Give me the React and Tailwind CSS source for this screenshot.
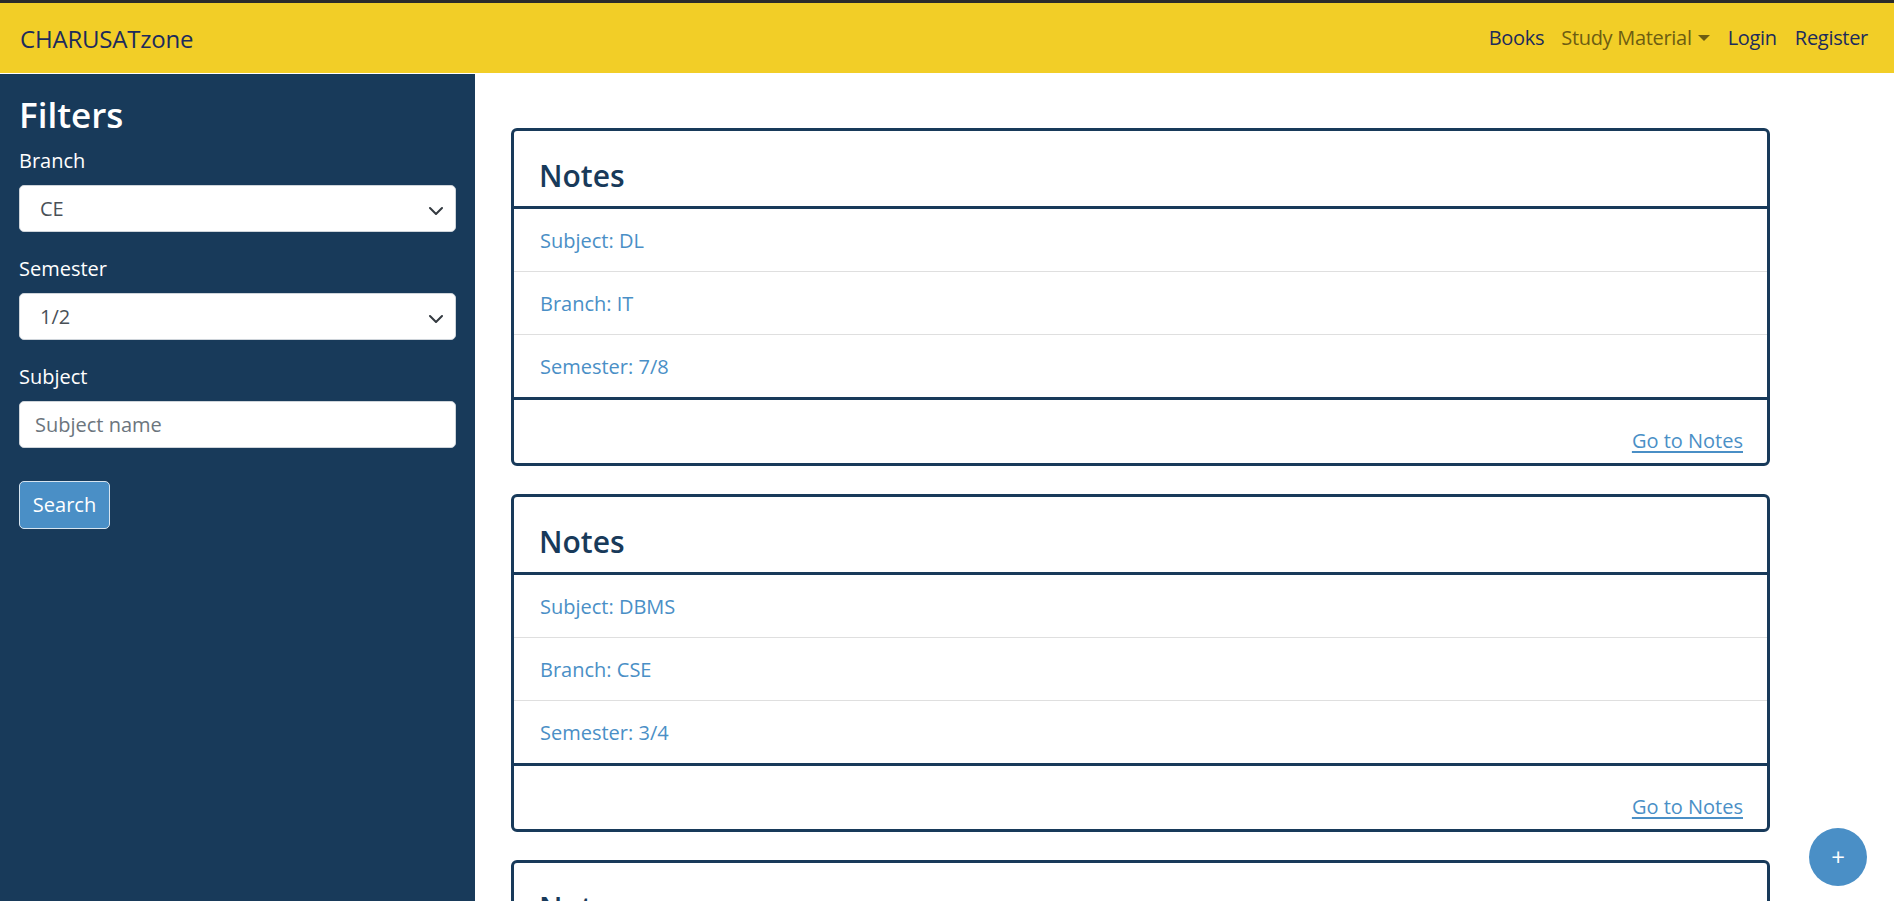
import React from "react";

const FONT = { fontFamily: '"Open Sans", "Noto Sans", sans-serif' };

function Chevron() {
  return (
    <svg
      className="pointer-events-none absolute right-[12px] top-1/2 -translate-y-1/2"
      width="16"
      height="12"
      viewBox="0 0 16 12"
      fill="none"
    >
      <path d="m2 5 6 6 6-6" stroke="#343a40" strokeWidth="2" strokeLinecap="round" strokeLinejoin="round" />
    </svg>
  );
}

function SelectField({ label, value, options }) {
  return (
    <div className="mb-[22px]">
      <div className="mb-[9px] h-[30px] text-[20px] leading-[30px] text-white">{label}</div>
      <div className="relative h-[47px]">
        <select
          defaultValue={value}
          className="h-full w-full appearance-none rounded-[5px] border border-[#ced4da] bg-white pl-[20px] text-[20px] text-[#495057] outline-none"
          style={FONT}
        >
          {options.map((o) => (
            <option key={o}>{o}</option>
          ))}
        </select>
        <Chevron />
      </div>
    </div>
  );
}

function NoteCard({ subject, branch, semester, partial }) {
  return (
    <div className="mb-[28px] w-[1259px] rounded-[6px] border-[3px] border-[#183a5a] bg-white">
      <div className="h-[78px] border-b-[3px] border-[#183a5a] pl-[25px] pt-[27px]">
        <div className="text-[30px] font-semibold leading-[36px] text-[#183a5a]">Notes</div>
      </div>
      {!partial && (
        <>
          <div className="flex h-[63px] items-center border-b border-[#dfdfdf] pl-[26px] pt-[2px] text-[20px] leading-[30px] text-[#4a8fc6]">
            Subject: {subject}
          </div>
          <div className="flex h-[63px] items-center border-b border-[#dfdfdf] pl-[26px] pt-[2px] text-[20px] leading-[30px] text-[#4a8fc6]">
            Branch: {branch}
          </div>
          <div className="flex h-[62px] items-center pl-[26px] pt-[2px] text-[20px] leading-[30px] text-[#4a8fc6]">
            Semester: {semester}
          </div>
          <div className="flex h-[66px] justify-end border-t-[3px] border-[#183a5a] pr-[24px] pt-[26px]">
            <a href="#" className="h-[30px] text-[20px] leading-[30px] text-[#4a8fc6] underline underline-offset-[3px]">
              Go to Notes
            </a>
          </div>
        </>
      )}
    </div>
  );
}

export default function App() {
  return (
    <div className="relative h-[901px] overflow-hidden bg-white" style={FONT}>
      <div className="h-[3px] bg-[#2b2b2b]" />
      <nav className="flex h-[70px] items-center justify-between bg-[#f2ce27] pl-[20px] pr-[26px]">
        <a href="#" className="text-[24px] leading-[37px] tracking-[-0.2px] text-[#1c2b5c]">CHARUSATzone</a>
        <div className="flex items-center text-[20px] leading-[30px] tracking-[-0.3px]">
          <a href="#" className="text-[#1c2b5c]">Books</a>
          <a href="#" className="ml-[17px] flex items-center text-[#6d5d12]">
            Study Material
            <span className="ml-[6px] inline-block h-0 w-0 border-x-[6px] border-t-[6px] border-x-transparent border-t-[#6d5d12]" />
          </a>
          <a href="#" className="ml-[18px] text-[#1c2b5c]">Login</a>
          <a href="#" className="ml-[18px] text-[#1c2b5c]">Register</a>
        </div>
      </nav>
      <div className="h-px bg-white" />
      <div className="flex h-[827px]">
        <aside className="w-[475px] shrink-0 bg-[#183a5a] px-[19px] pt-[20px]">
          <h3 className="mb-[10px] h-[42px] text-[35px] font-semibold leading-[42px] text-white">Filters</h3>
          <SelectField label="Branch" value="CE" options={["CE", "IT", "CSE"]} />
          <SelectField label="Semester" value="1/2" options={["1/2", "3/4", "5/6", "7/8"]} />
          <div className="mb-[33px]">
            <div className="mb-[9px] h-[30px] text-[20px] leading-[30px] text-white">Subject</div>
            <input
              placeholder="Subject name"
              className="h-[47px] w-full rounded-[5px] border border-[#ced4da] bg-white pl-[15px] text-[20px] text-[#495057] outline-none placeholder:text-[#6c757d]"
              style={FONT}
            />
          </div>
          <button className="h-[48px] w-[91px] rounded-[5px] border border-[#d6e4f0] bg-[#4a8fc6] text-[20px] text-white">
            Search
          </button>
        </aside>
        <main className="flex-1 pl-[36px] pt-[54px]">
          <NoteCard subject="DL" branch="IT" semester="7/8" />
          <NoteCard subject="DBMS" branch="CSE" semester="3/4" />
          <NoteCard partial />
        </main>
      </div>
      <button className="absolute bottom-[15px] right-[27px] flex h-[58px] w-[58px] items-center justify-center rounded-full bg-[#4a8fc6] text-[24px] leading-none text-white">
        +
      </button>
    </div>
  );
}
